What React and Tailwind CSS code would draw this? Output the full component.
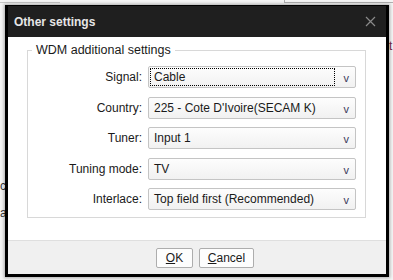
import React from "react";

function Select({ value, focus }) {
  return (
    <div className="relative flex h-[22px] w-[208px] items-center rounded-[2px] border border-[#c4c4c4] bg-gradient-to-b from-[#fdfdfd] to-[#f1f1f1]">
      {focus ? (
        <div className="ml-[1px] flex h-[18px] w-[185px] items-center border border-dotted border-black pl-[3px]">
          {value}
        </div>
      ) : (
        <div className="pl-[5px]">{value}</div>
      )}
      <span className="absolute right-[6px] top-[3px] text-[11px] text-[#3a3a5a]">v</span>
    </div>
  );
}

function Row({ label, value, focus }) {
  return (
    <div className="flex items-center">
      <div className="w-[120px] pr-[6px] text-right">{label}</div>
      <Select value={value} focus={focus} />
    </div>
  );
}

export default function App() {
  return (
    <div
      className="relative h-[280px] w-[393px] overflow-hidden bg-[#f4f4f4] text-[12px] text-[#1a1a1a]"
      style={{ fontFamily: '"Liberation Sans", Arial, sans-serif' }}
    >
      <div className="absolute left-0 top-[2px] h-px w-[60px] bg-[#c8c8c8]" />
      <div className="absolute left-[285px] top-[2px] h-px w-[108px] bg-[#b0b0b0]" />
      <div className="absolute left-[284px] top-0 h-[3px] w-px bg-[#b0b0b0]" />
      <div className="absolute left-0 top-[180px] text-[12px] leading-none text-[#333]">c</div>
      <div className="absolute left-0 top-[207px] text-[12px] leading-none text-[#333]">a</div>
      <div className="absolute left-[389px] top-[40px] text-[12px] leading-none text-[#7a2b4b]">t</div>
      <div className="relative pl-[5px] pt-[5px]">
        <div className="flex h-[272px] w-[384px] flex-col border-x-[3px] border-b-[3px] border-t border-black bg-white shadow-[0_0_3px_1px_rgba(0,0,0,0.3)]">
          <div className="flex h-[31px] items-center justify-between bg-[#1f1f1f] pl-[6px] pr-[8px]">
            <span className="text-[12px] font-bold text-[#e6e6e6]">Other settings</span>
            <svg width="11" height="11" viewBox="0 0 11 11" className="mr-[2px]">
              <path d="M1 1L10 10M10 1L1 10" stroke="#8a8a8a" strokeWidth="1.2" />
            </svg>
          </div>
          <div className="flex-1 bg-white pl-[19px] pr-[20px] pt-[13px]">
            <div className="relative h-[168px] border border-[#d8d8d8]">
              <div className="absolute left-[4px] top-[-9px] bg-white px-[4px] leading-[16px] text-[12.5px]">
                WDM additional settings
              </div>
              <div className="flex flex-col gap-[8.5px] pt-[15px]">
                <Row label="Signal:" value="Cable" focus />
                <Row label="Country:" value="225 - Cote D'Ivoire(SECAM K)" />
                <Row label="Tuner:" value="Input 1" />
                <Row label="Tuning mode:" value="TV" />
                <Row label="Interlace:" value="Top field first (Recommended)" />
              </div>
            </div>
          </div>
          <div className="flex h-[34px] items-center gap-[6px] border-t border-[#dfdfdf] bg-[#f0f0f0] pl-[148px]">
            <button className="flex h-[20px] w-[37px] items-center justify-center rounded-[2px] border border-[#adadad] bg-[#fdfdfd]">
              <span className="underline">O</span>K
            </button>
            <button className="flex h-[20px] w-[55px] items-center justify-center rounded-[2px] border border-[#adadad] bg-[#fdfdfd]">
              <span className="underline">C</span>ancel
            </button>
          </div>
        </div>
      </div>
    </div>
  );
}
